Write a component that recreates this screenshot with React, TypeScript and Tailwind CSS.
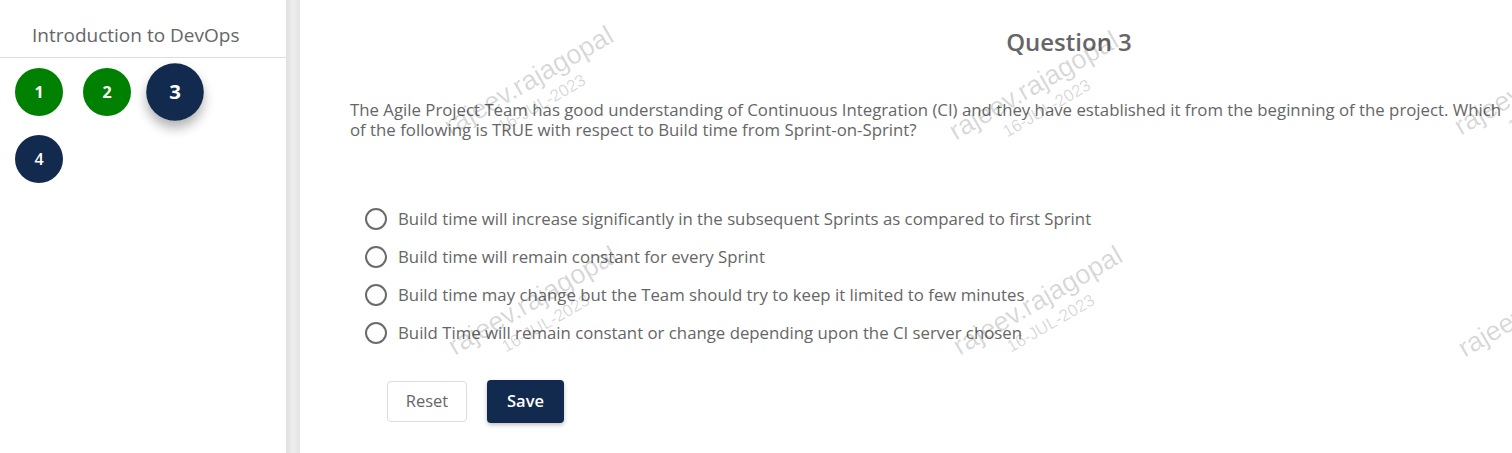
import React from "react";

const options = [
  "Build time will increase significantly in the subsequent Sprints as compared to first Sprint",
  "Build time will remain constant for every Sprint",
  "Build time may change but the Team should try to keep it limited to few minutes",
  "Build Time will remain constant or change depending upon the CI server chosen",
];

function Watermark({ className }: { className: string }) {
  return (
    <div
      className={`pointer-events-none absolute flex -translate-x-1/2 -translate-y-1/2 -rotate-[30deg] flex-col items-center whitespace-nowrap text-black/[0.16] ${className}`}
      style={{ fontFamily: '"Liberation Sans", Arial, sans-serif' }}
    >
      <span className="text-[27px] leading-[27px]">rajeev.rajagopal</span>
      <span className="mt-[4px] text-[17px] leading-[17px]">16-JUL-2023</span>
    </div>
  );
}

export default function App() {
  return (
    <div
      className="flex h-[453px] w-[1512px] overflow-hidden bg-white text-[#666666]"
      style={{ fontFamily: '"Open Sans", "Noto Sans", sans-serif' }}
    >
      {/* sidebar */}
      <aside className="w-[286px] shrink-0">
        <div className="h-[58px] border-b border-[#dddddd] pl-[32px] pt-[22px] text-[19px] leading-[26px] text-[#666666]">
          Introduction to DevOps
        </div>
        <div className="flex w-[220px] flex-wrap gap-x-[20px] gap-y-[19px] pl-[15px] pt-[10px]">
          <div className="flex h-[48px] w-[48px] items-center justify-center rounded-full bg-[#008000] text-[16px] font-bold text-white">
            1
          </div>
          <div className="flex h-[48px] w-[48px] items-center justify-center rounded-full bg-[#008000] text-[16px] font-bold text-white">
            2
          </div>
          <div className="flex h-[48px] w-[48px] scale-[1.2] items-center justify-center rounded-full bg-[#122a4d] text-[17px] font-bold text-white shadow-[0_6px_10px_rgba(0,0,0,0.3)]">
            3
          </div>
          <div className="flex h-[48px] w-[48px] items-center justify-center rounded-full bg-[#122a4d] text-[16px] font-semibold text-white">
            4
          </div>
        </div>
      </aside>

      {/* divider */}
      <div className="w-[14px] shrink-0 bg-gradient-to-r from-[#e0e0e0] via-[#eeeeee] to-[#e4e4e4]" />

      {/* main */}
      <main className="relative w-[1538px] shrink-0">
        <h2 className="pt-[26px] text-center text-[24px] font-semibold leading-[32px] text-[#666666]">Question 3</h2>

        <div className="pl-[50px]">
          <p className="mt-[42px] w-[1162px] text-[16.8px] leading-[20px] text-[#666666]">
            The Agile Project Team has good understanding of Continuous Integration (CI) and they have established it from the
            beginning of the project. Which of the following is TRUE with respect to Build time from Sprint-on-Sprint?
          </p>

          <div className="mt-[60px] flex flex-col">
            {options.map((o) => (
              <label key={o} className="flex h-[38px] items-center gap-[11px] pl-[15px] text-[16.8px] text-[#666666]">
                <span className="h-[22px] w-[22px] shrink-0 rounded-full border-2 border-[#6b6b6b]" />
                <span>{o}</span>
              </label>
            ))}
          </div>

          <div className="mt-[28px] flex items-center gap-[20px] pl-[37px]">
            <button className="h-[41px] w-[80px] rounded-[4px] border border-[#dddddd] bg-white text-[16.5px] text-[#666666]">
              Reset
            </button>
            <button className="h-[43px] w-[77px] rounded-[4px] bg-[#122a4d] text-[16.5px] font-semibold text-white shadow-[0_2px_4px_rgba(0,0,0,0.25)]">
              Save
            </button>
          </div>
        </div>

        <Watermark className="left-[234px] top-[90px]" />
        <Watermark className="left-[739px] top-[95px]" />
        <Watermark className="left-[1244px] top-[90px]" />
        <Watermark className="left-[238px] top-[310px]" />
        <Watermark className="left-[743px] top-[310px]" />
        <Watermark className="left-[1248px] top-[312px]" />
      </main>
    </div>
  );
}
